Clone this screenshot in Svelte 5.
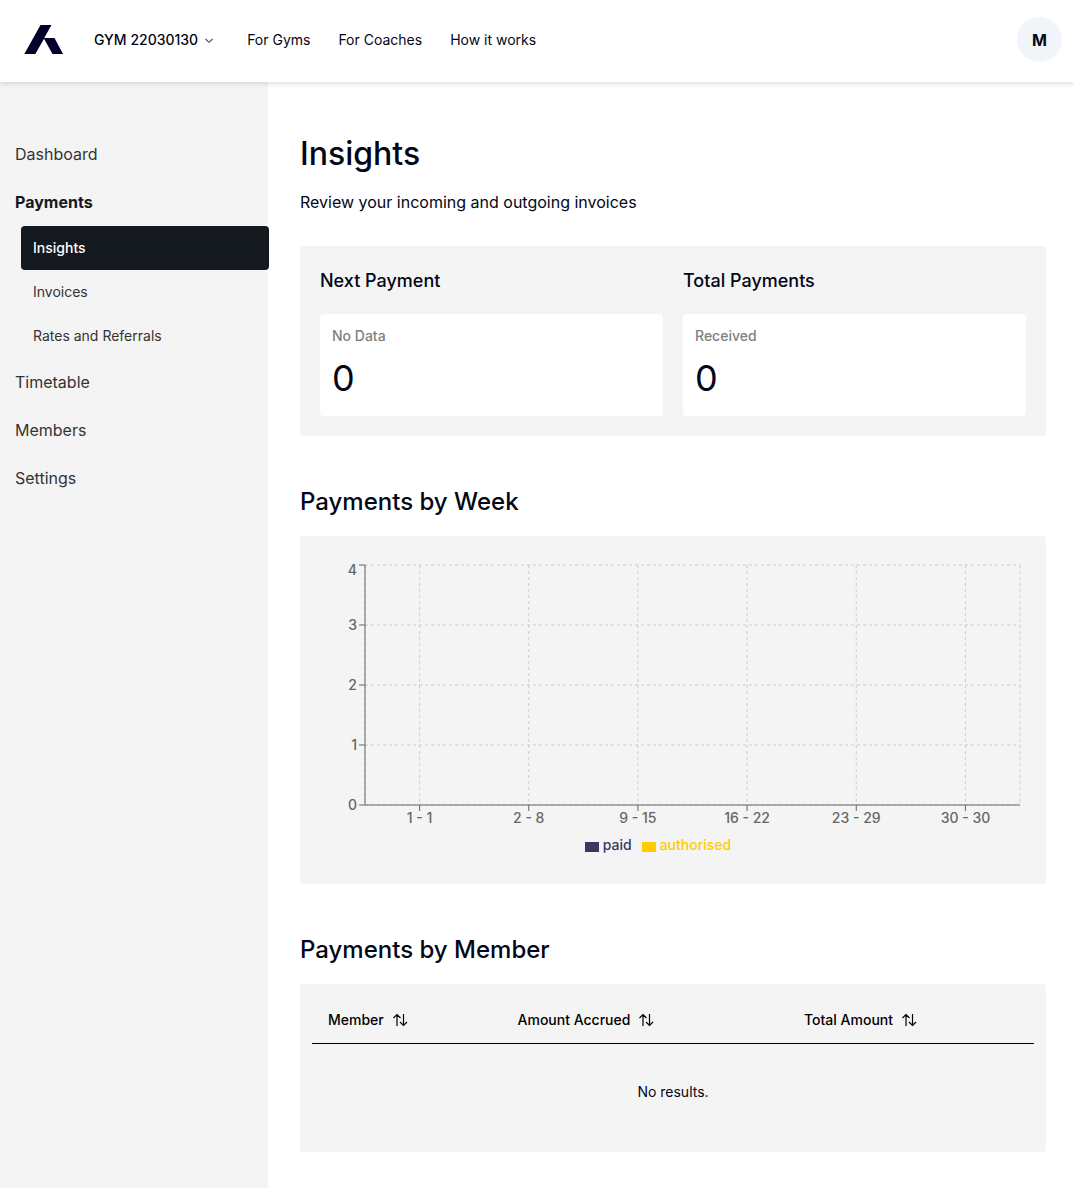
<script>
  const topLinks = ['For Gyms', 'For Coaches', 'How it works'];
  const subLinks = ['Insights', 'Invoices', 'Rates and Referrals'];
  const lowerLinks = ['Timetable', 'Members', 'Settings'];
  const stats = [
    { title: 'Next Payment', label: 'No Data', value: 0 },
    { title: 'Total Payments', label: 'Received', value: 0 }
  ];
  const weeks = ['1 - 1', '2 - 8', '9 - 15', '16 - 22', '23 - 29', '30 - 30'];
  const levels = [4, 3, 2, 1, 0];
  const columns = ['Member', 'Amount Accrued', 'Total Amount'];

  let chartWidth = $state(746);
  const left = 65;
  const top = 5;
  const step = 60;
  const bottom = top + step * 4;
  let right = $derived(chartWidth - 26);
  let band = $derived((right - left) / weeks.length);
</script>

<header class="topbar">
  <a class="logo" href="#home" aria-label="Home">
    <svg width="40" height="30" viewBox="0 0 40 30" aria-hidden="true">
      <path d="M16.5 0H27.5L20.2 13H30.5L39 29H28.5L20 13.8L11.3 29H0.3Z" fill="#03002b" />
    </svg>
  </a>
  <nav class="topnav" aria-label="Main">
    <button class="gym" type="button">
      GYM 22030130
      <svg width="12" height="12" viewBox="0 0 12 12" aria-hidden="true">
        <path d="M2.5 5L6 8.3L9.5 5" fill="none" stroke="#444a56" stroke-width="1.1" />
      </svg>
    </button>
    {#each topLinks as link}
      <a href="#top">{link}</a>
    {/each}
  </nav>
  <button class="avatar" type="button" aria-label="Account M">M</button>
</header>

<div class="body">
  <aside>
    <nav class="side" aria-label="Gym">
      <a href="#dashboard">Dashboard</a>
      <a class="open" href="#payments">Payments</a>
      <div class="sub">
        {#each subLinks as link, i}
          <a href="#sub" class:active={i === 0}>{link}</a>
        {/each}
      </div>
      {#each lowerLinks as link}
        <a href="#section">{link}</a>
      {/each}
    </nav>
  </aside>

  <main>
    <h1>Insights</h1>
    <p class="lead">Review your incoming and outgoing invoices</p>

    <div class="panel stats">
      {#each stats as stat}
        <section>
          <h3>{stat.title}</h3>
          <div class="card">
            <div class="label">{stat.label}</div>
            <div class="value">{stat.value}</div>
          </div>
        </section>
      {/each}
    </div>

    <h2>Payments by Week</h2>
    <div class="panel chart" bind:clientWidth={chartWidth}>
      <svg width={chartWidth} height="270" role="img" aria-label="Payments by week">
        <g class="grid">
          {#each levels as level, i}
            <line x1={left} x2={right} y1={top + i * step} y2={top + i * step} />
          {/each}
          {#each weeks as week, i}
            <line x1={left + band * (i + 0.5)} x2={left + band * (i + 0.5)} y1={top} y2={bottom} />
          {/each}
          <line x1={left} x2={left} y1={top} y2={bottom} />
          <line x1={right} x2={right} y1={top} y2={bottom} />
        </g>
        <g class="axis">
          <line x1={left} x2={left} y1={top} y2={bottom} />
          <line x1={left} x2={right} y1={bottom} y2={bottom} />
          {#each levels as level, i}
            <line x1={left - 6} x2={left} y1={top + i * step} y2={top + i * step} />
            <text x={left - 8} y={i === 0 ? top + 10 : top + i * step + 5} text-anchor="end">{level}</text>
          {/each}
          {#each weeks as week, i}
            <line x1={left + band * (i + 0.5)} x2={left + band * (i + 0.5)} y1={bottom} y2={bottom + 6} />
            <text x={left + band * (i + 0.5)} y={bottom + 18} text-anchor="middle">{week}</text>
          {/each}
        </g>
      </svg>
      <ul class="legend">
        <li class="paid">paid</li>
        <li class="authorised">authorised</li>
      </ul>
    </div>

    <h2>Payments by Member</h2>
    <div class="panel members">
      <table>
        <thead>
          <tr>
            {#each columns as column}
              <th scope="col">
                <button type="button">
                  {column}
                  <svg width="16" height="16" viewBox="0 0 16 16" aria-hidden="true">
                    <path d="M5 14V2.5M1.5 6L5 2.5L8.5 6M11.5 2V13.5M8 10L11.5 13.5L15 10" fill="none" stroke="#000" stroke-width="1.2" />
                  </svg>
                </button>
              </th>
            {/each}
          </tr>
        </thead>
        <tbody>
          <tr><td colspan="3">No results.</td></tr>
        </tbody>
      </table>
    </div>
  </main>
</div>

<style>
  :global(body) {
    margin: 0;
    background: #fff;
    color: #020617;
    font-family: Inter, "Liberation Sans", sans-serif;
    font-size: 14px;
    line-height: 20px;
  }
  :global(#app) {
    display: flex;
    flex-direction: column;
    min-height: 100vh;
  }
  a {
    color: inherit;
    text-decoration: none;
  }
  button {
    padding: 0;
    border: 0;
    background: none;
    color: inherit;
    font: inherit;
    cursor: pointer;
  }
  h1, h2, h3, p, ul {
    margin: 0;
    font-weight: 500;
  }
  .topbar {
    position: relative;
    display: flex;
    align-items: center;
    height: 82px;
    box-sizing: border-box;
    padding: 0 12px 3px 24px;
    background: #fff;
    box-shadow: 0 1px 6px rgba(0, 0, 0, 0.16);
  }
  .logo svg {
    display: block;
  }
  .topnav {
    display: flex;
    flex: 1;
    gap: 28px;
    margin-left: 30px;
  }
  .gym {
    display: flex;
    align-items: center;
    gap: 5px;
    margin-right: 4px;
    font-weight: 500;
  }
  .avatar {
    width: 45px;
    height: 45px;
    border-radius: 50%;
    background: #f1f5f9;
    font-size: 16px;
    font-weight: 700;
  }
  .body {
    display: flex;
    flex: 1;
  }
  aside {
    flex: 0 0 268px;
    background: #f4f4f4;
    color: #333;
  }
  .side {
    display: flex;
    flex-direction: column;
    padding-top: 48px;
  }
  .side a {
    padding: 12px 15px;
    font-size: 16px;
    line-height: 24px;
  }
  .side .open {
    color: #14181f;
    font-weight: 700;
  }
  .sub {
    display: flex;
    flex-direction: column;
    margin: 0 -1px 0 21px;
  }
  .sub a {
    padding: 12px;
    border-radius: 4px;
    font-size: 14px;
    line-height: 20px;
  }
  .sub .active {
    background: #14181f;
    color: #fff;
    font-weight: 500;
  }
  main {
    flex: 1;
    min-width: 0;
    padding: 48px 28px 36px 32px;
  }
  h1 {
    font-size: 32px;
    line-height: 48px;
  }
  h2 {
    margin: 50px 0 18px;
    font-size: 24px;
    line-height: 32px;
  }
  h3 {
    font-size: 18px;
    line-height: 30px;
  }
  .lead {
    margin: 12px 0 32px;
    font-size: 16px;
    font-weight: 400;
    line-height: 24px;
  }
  .panel {
    border-radius: 4px;
    background: #f4f4f4;
  }
  .stats {
    display: grid;
    grid-template-columns: 1fr 1fr;
    gap: 20px;
    padding: 20px;
  }
  .card {
    margin-top: 18px;
    padding: 12px;
    border-radius: 4px;
    background: #fff;
  }
  .label {
    color: #808080;
    font-weight: 500;
  }
  .value {
    margin: 8px 0 2px;
    font-size: 36px;
    line-height: 48px;
  }
  .chart {
    padding: 24px 0 28px;
  }
  .chart svg {
    display: block;
  }
  .grid line {
    stroke: #ccc;
    stroke-dasharray: 3 3;
  }
  .axis line {
    stroke: #666;
  }
  .axis text {
    fill: #666;
    font-weight: 500;
  }
  .legend {
    display: flex;
    justify-content: center;
    gap: 10px;
    padding: 5px 30px 1px 0;
    list-style: none;
  }
  .legend li {
    display: flex;
    align-items: center;
    gap: 4px;
  }
  .legend li::before {
    width: 14px;
    height: 10px;
    margin-top: 3px;
    background: currentColor;
    content: "";
  }
  .paid {
    color: #383862;
  }
  .authorised {
    color: #ffcc00;
    font-weight: 500;
  }
  .members {
    padding: 12px;
  }
  table {
    width: 100%;
    border-collapse: collapse;
  }
  th {
    height: 47px;
    padding: 0 16px;
    border-bottom: 1px solid #000;
    color: #000;
    font-weight: 500;
    text-align: left;
  }
  th button {
    display: flex;
    align-items: center;
    gap: 8px;
    white-space: nowrap;
  }
  td {
    height: 96px;
    padding: 0;
    text-align: center;
  }
</style>
